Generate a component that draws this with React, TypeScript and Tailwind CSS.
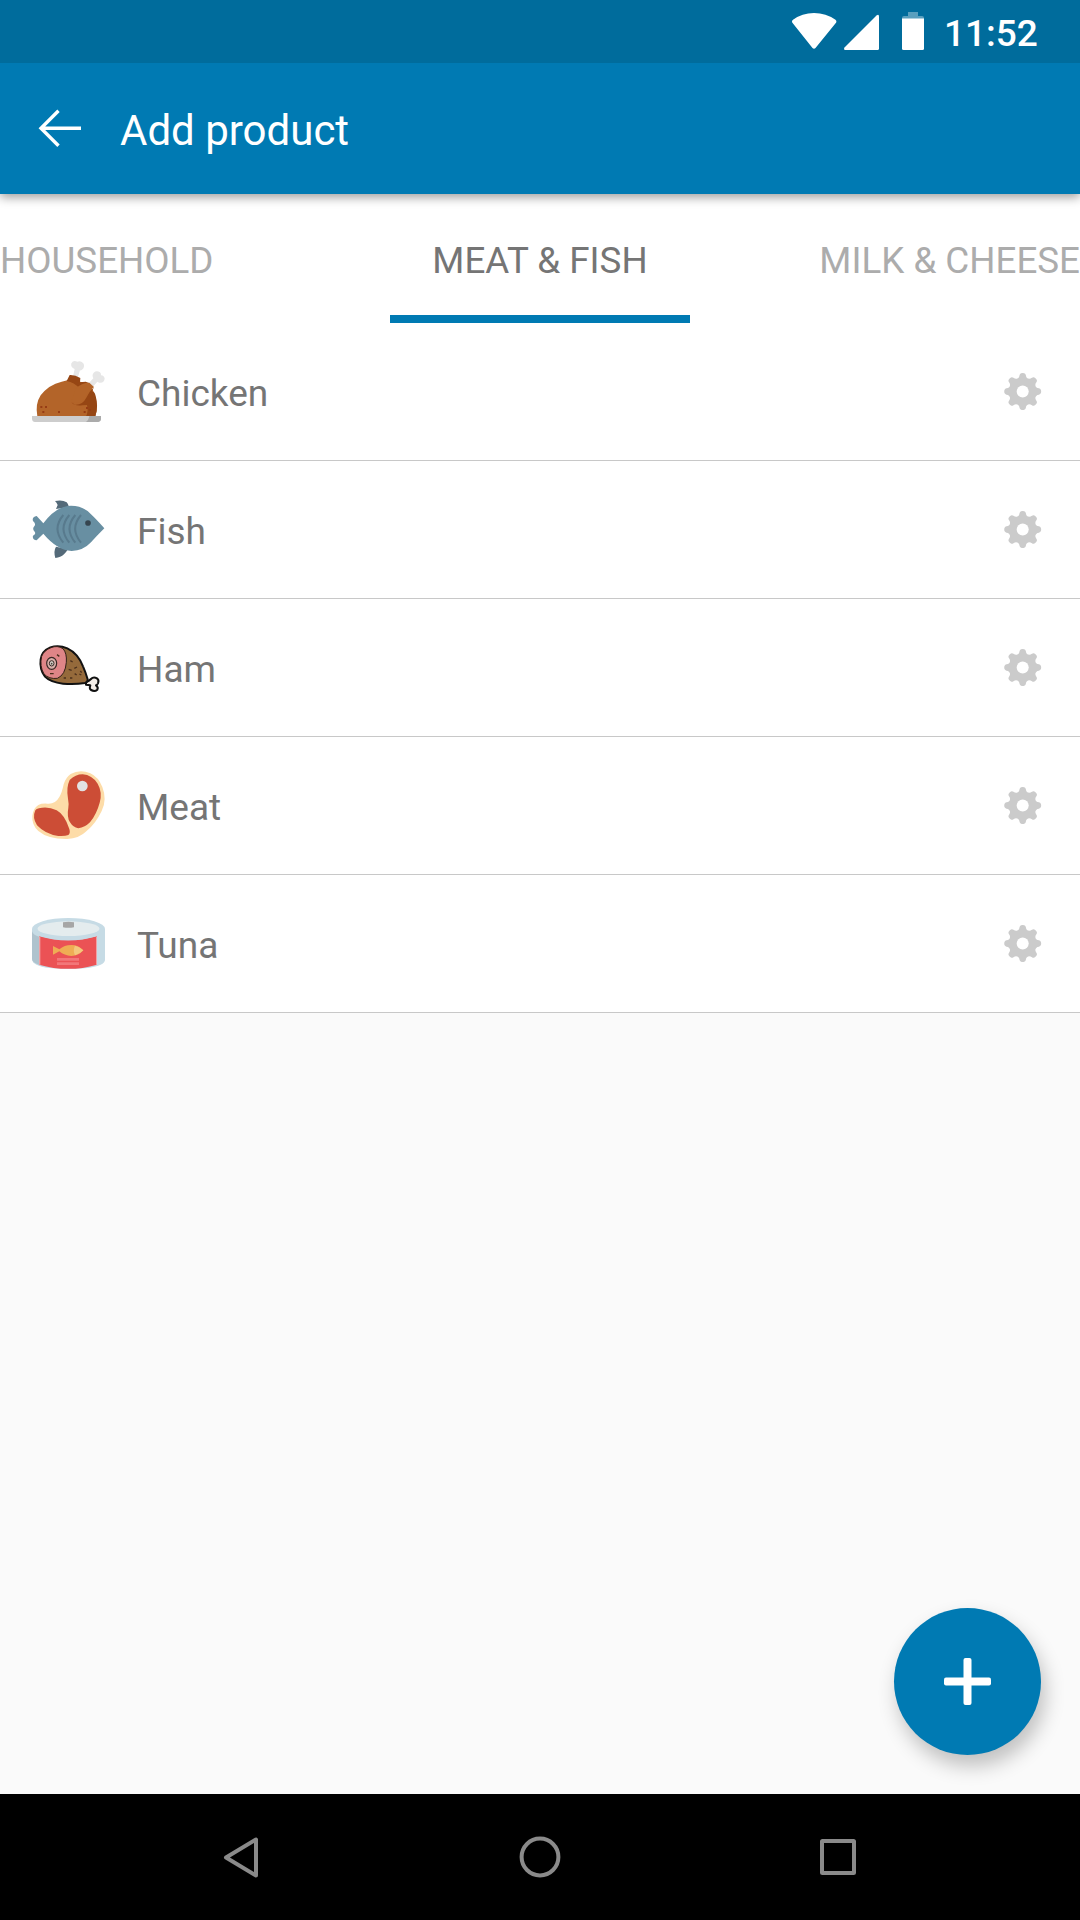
import { useState } from 'react';
import type { ReactNode } from 'react';

type Product = {
  name: string;
  icon: ReactNode;
};

const products: Product[] = [
  { name: 'Chicken', icon: <ChickenIcon /> },
  { name: 'Fish', icon: <FishIcon /> },
  { name: 'Ham', icon: <HamIcon /> },
  { name: 'Meat', icon: <MeatIcon /> },
  { name: 'Tuna', icon: <TunaIcon /> },
];

export default function App() {
  return (
    <div className="flex flex-col w-[1080px] h-[1920px] overflow-hidden bg-[#fafafa] font-[Roboto,sans-serif]">
      <StatusBar />
      <header className="relative z-10 flex items-center h-[131px] shrink-0 bg-[#007ab3] pl-[38px] text-white shadow-[0_3px_10px_rgba(0,0,0,0.4)]">
        <button aria-label="Back">
          <svg width="44" height="44" viewBox="0 0 44 44" fill="none" stroke="currentColor" strokeWidth="3.4">
            <path d="M43 21.300H3M20.500 3.800L3 21.300L20.500 38.800" />
          </svg>
        </button>
        <h1 className="ml-[38px] pt-[5px] text-[42px] leading-none">Add product</h1>
      </header>
      <Tabs />
      <main className="flex-1">
        <ul>
          {products.map((product) => (
            <li key={product.name} className="flex items-center h-[138px] bg-white border-b border-[#c8c8c8] pl-5 pr-[38px]">
              {product.icon}
              <span className="flex-1 ml-[17px] pt-[4px] text-[37px] leading-none text-[#757575]">{product.name}</span>
              <button aria-label="Settings">
                <GearIcon />
              </button>
            </li>
          ))}
        </ul>
      </main>
      <div className="flex justify-end pr-[39px] pb-[39px]">
        <button
          aria-label="Add"
          className="flex items-center justify-center w-[147px] h-[147px] rounded-full bg-[#007ab3] shadow-[4px_11px_20px_rgba(0,0,0,0.24)]"
        >
          <svg width="47" height="47" viewBox="0 0 47 47" fill="#fff">
            <rect x="19.5" width="8" height="47" rx="2" />
            <rect y="19.5" width="47" height="8" rx="2" />
          </svg>
        </button>
      </div>
      <NavBar />
    </div>
  );
}

function StatusBar() {
  return (
    <div className="relative z-20 flex h-[63px] shrink-0 bg-[#006c9c] text-white">
      <svg className="ml-[780px]" width="160" height="63" viewBox="780 0 160 63" fill="#fff">
        <path d="M792.2 22.5Q791.3 21 793 19.8Q802 13 814 13Q826 13 835.5 19.8Q837 21 836.2 22.5L815.5 48Q814 49.6 812.5 48Z" />
        <path d="M876.500 15.500Q879 13.800 879 16.500V48.500Q879 50 877.500 50H845.500Q843.200 50 844.500 47.500Z" />
        <path d="M908 12H918V16H922Q924 16 924 18V19H902V18Q902 16 904 16H908Z" opacity="0.35" />
        <path d="M902 18.500H924V48.500Q924 50 922.500 50H903.500Q902 50 902 48.500Z" />
      </svg>
      <span className="ml-[4px] mt-[14px] text-[37px] leading-[40px] font-medium">11:52</span>
    </div>
  );
}

function Tabs() {
  const [active, setActive] = useState('MEAT & FISH');

  const tabClass = (name: string) => (name === active ? 'text-[#757575]' : 'text-[#acacac]');

  return (
    <nav className="flex flex-col items-center h-[129px] shrink-0 bg-white">
      <div className="grid grid-cols-3 w-full h-[121px] pt-[3px] text-[36.75px] leading-none whitespace-nowrap">
        <button onClick={() => setActive('HOUSEHOLD')} className={`text-left h-[129px] ${tabClass('HOUSEHOLD')}`}>
          HOUSEHOLD
        </button>
        <button onClick={() => setActive('MEAT & FISH')} className={`text-center h-[129px] ${tabClass('MEAT & FISH')}`}>
          MEAT &amp; FISH
        </button>
        <button onClick={() => setActive('MILK & CHEESE')} className={`text-right h-[129px] ${tabClass('MILK & CHEESE')}`}>
          MILK &amp; CHEESE
        </button>
      </div>
      <div className="w-[300px] h-2 bg-[#007ab3]" />
    </nav>
  );
}

function NavBar() {
  return (
    <div className="h-[126px] shrink-0 bg-black">
      <svg width="1080" height="126" viewBox="0 0 1080 126" fill="none" stroke="#8a8a8a" strokeWidth="4" strokeLinejoin="round">
        <path d="M256 45.500V81.500L226 63.500Z" />
        <circle cx="540" cy="63" r="18.400" />
        <rect x="822" y="47" width="32" height="32" rx="0.500" />
      </svg>
    </div>
  );
}

// one tooth every 45 degrees with a rounded gap between them
function gearPath() {
  const at = (r: number, deg: number) => {
    const a = (deg * Math.PI) / 180;
    return `${(r * Math.sin(a)).toFixed(2)} ${(-r * Math.cos(a)).toFixed(2)}`;
  };
  let d = `M${at(18.3, -5)}`;
  for (let i = 0; i < 8; i++) {
    const t = i * 45;
    d += `Q${at(18.7, t)} ${at(18.3, t + 5)}`;
    d += `Q${at(17.9, t + 9.5)} ${at(16.5, t + 11)}`;
    d += `C${at(13.3, t + 15)} ${at(13.3, t + 30)} ${at(16.5, t + 34)}`;
    d += `Q${at(17.9, t + 35.5)} ${at(18.3, t + 40)}`;
  }
  return d + 'Z';
}

function GearIcon() {
  return (
    <svg width="38" height="38" viewBox="-18.7 -18.5 38 38">
      <path d={gearPath()} fill="#cbcbcb" />
      <circle r="6" fill="#fff" />
    </svg>
  );
}

function ChickenIcon() {
  return (
    <svg width="100" height="90" viewBox="0 6 300 270">
      <path d="M159 94L164 72Q151 68 154 55Q160 44 172 50Q184 45 191 56Q195 66 186 74Q182 77 180 76L174 96Z" fill="#e6e6e6" />
      <path d="M204 117L220 100Q215 90 221 83Q230 75 240 82Q244 87 243 91Q253 92 254 101Q252 115 238 113Q234 112 232 110L216 128Z" fill="#e6e6e6" />
      <path d="M52 214Q45 177 62 151Q86 119 125 110L145 105L180 110Q198 112 212 122Q228 151 230 180Q232 200 226 214Z" fill="#b36429" />
      <path d="M140 108L149 90Q165 89 181 99L180 112L197 110L207 114L178 130Q163 112 140 108Z" fill="#964614" />
      <path d="M222 126Q205 142 198 160Q187 181 165 179L154 172Q164 184 187 181L201 180Q206 200 198 214H226Q236 184 227 153Q224 140 216 139Z" fill="#964614" />
      <path d="M168 130Q184 113 208 113L222 126Q207 136 200 151Q190 177 165 174L154 170Z" fill="#b36429" />
      <g fill="#963c14">
        <rect x="61" y="183" width="6" height="6" />
        <rect x="75" y="183" width="6" height="6" />
        <rect x="67" y="198" width="6" height="6" />
        <rect x="114" y="198" width="6" height="6" />
        <rect x="191" y="198" width="6" height="6" />
        <rect x="198" y="186" width="6" height="6" />
        <rect x="207" y="192" width="6" height="6" />
      </g>
      <path d="M36 213H243V223Q242 231 235 231H45Q37 231 36 222Z" fill="#cdcdcd" />
      <path d="M208 213H243V223Q242 231 235 231H197Q205 228 208 213Z" fill="#ababab" />
    </svg>
  );
}

function FishIcon() {
  return (
    <svg width="100" height="90" viewBox="0 0 300 270">
      <path d="M108 72L113 60Q110 53 105 48Q127 43 140 52Q145 57 147 66Z" fill="#546a79" />
      <path d="M108 185Q100 198 106 219Q122 218 132 208Q139 201 144 193Z" fill="#546a79" />
      <path d="M70 115Q108 63 153 62Q190 62 213 88Q228 102 253 130Q229 154 213 172Q190 197 155 198Q111 195 70 146L50 166Q36 163 39 152Q49 147 44 140Q35 131 44 122Q48 116 39 108Q35 96 50 93Z" fill="#688fa2" />
      <g fill="none" stroke="#587a8d" strokeWidth="6">
        <path d="M130 90Q95 131 130 173" />
        <path d="M148 90Q113 131 148 173" />
        <path d="M166 90Q131 131 166 173" />
        <path d="M183 90Q148 131 183 173" />
      </g>
      <circle cx="204" cy="114" r="8.500" fill="#36454f" />
    </svg>
  );
}

function HamIcon() {
  return (
    <svg width="100" height="90" viewBox="0 -6 300 270">
      <path d="M198 170Q207 169 213 162Q220 154 231 160Q238 165 234 175Q231 181 228 181Q236 187 232 194Q224 201 213 195Q207 190 211 181L198 179Z" fill="#f5eee8" stroke="#111" strokeWidth="6" strokeLinejoin="round" />
      <path d="M91 67Q117 59 142 70Q174 85 189 124Q197 142 203 163Q204 171 195 174Q164 179 129 176Q91 172 75 155Q58 133 62 103Q65 78 91 67Z" fill="#956a3b" stroke="#111" strokeWidth="6" />
      <path d="M93 68Q112 60 129 71Q141 84 139 112Q136 150 112 160Q87 163 72 147Q58 123 65 94Q72 76 93 68Z" fill="#df8587" stroke="#332018" strokeWidth="3" />
      <ellipse cx="95" cy="115" rx="15" ry="18" fill="#d7afa9" stroke="#3a2825" strokeWidth="3.500" />
      <ellipse cx="95" cy="115" rx="7" ry="8" fill="#d3d0c8" stroke="#3a2825" strokeWidth="3" />
      <circle cx="95" cy="116" r="2.500" fill="#4a403a" />
      <path d="M111 89L118 94M90 146H101M151 107L158 111M163 130L171 126M146 133L155 136M164 146L170 150M131 159H138M150 159H157M178 147L184 150M181 138L185 143" stroke="#4b301d" strokeWidth="4" />
    </svg>
  );
}

function MeatIcon() {
  return (
    <svg width="100" height="90" viewBox="0 3 300 270">
      <path d="M152 42Q180 27 211 40Q235 51 247 81Q262 119 245 153Q227 191 199 214Q177 236 142 237Q85 238 55 213Q35 195 37 168Q39 145 55 135Q64 130 82 131Q106 133 118 111Q126 98 131 73Q137 53 152 42Z" fill="#fddca8" />
      <path d="M149 60Q166 43 188 43Q216 45 233 71Q248 97 239 128Q230 162 210 187Q195 202 175 205Q159 202 150 187Q140 171 145 143Q147 132 144 116Q138 83 149 60Z" fill="#cc4d36" />
      <path d="M57 145Q83 138 110 151Q134 164 148 207Q152 219 145 225Q136 229 115 228Q76 223 51 196Q36 173 46 151Q49 146 57 145Z" fill="#cc4d36" />
      <circle cx="187" cy="78" r="16" fill="#e2e2e2" />
    </svg>
  );
}

function TunaIcon() {
  return (
    <svg width="100" height="90" viewBox="0 -3 300 270">
      <path d="M36 87V177Q37 198 88 204Q145 210 204 204Q254 197 255 180V87Z" fill="#c6dbe5" />
      <path d="M36 94Q41 107 57 110V194Q37 188 36 177Z" fill="#afc3ce" />
      <path d="M57 109Q145 134 231 109V194Q145 219 57 194Z" fill="#eb5255" />
      <path d="M57 109L61 110V195L57 194ZM228 110L231 109V194L228 195Z" fill="#f0a2a5" />
      <ellipse cx="145.500" cy="87" rx="109.500" ry="33" fill="#c6dbe5" />
      <ellipse cx="145.500" cy="86" rx="93" ry="22" fill="#e4ecee" />
      <path d="M129 67Q145 64 162 67V82Q145 85 129 82Z" fill="#a6a6a6" />
      <path d="M99 138L118 148Q133 135 154 135Q175 135 190 151Q175 168 154 168Q133 167 118 154L99 164Z" fill="#efad54" />
      <path d="M165 137Q177 139 190 151Q180 162 165 166Q158 151 165 137Z" fill="#f4c77c" />
      <path d="M111 174H177V182H111ZM111 187H177V195H111Z" fill="#f27779" />
    </svg>
  );
}
